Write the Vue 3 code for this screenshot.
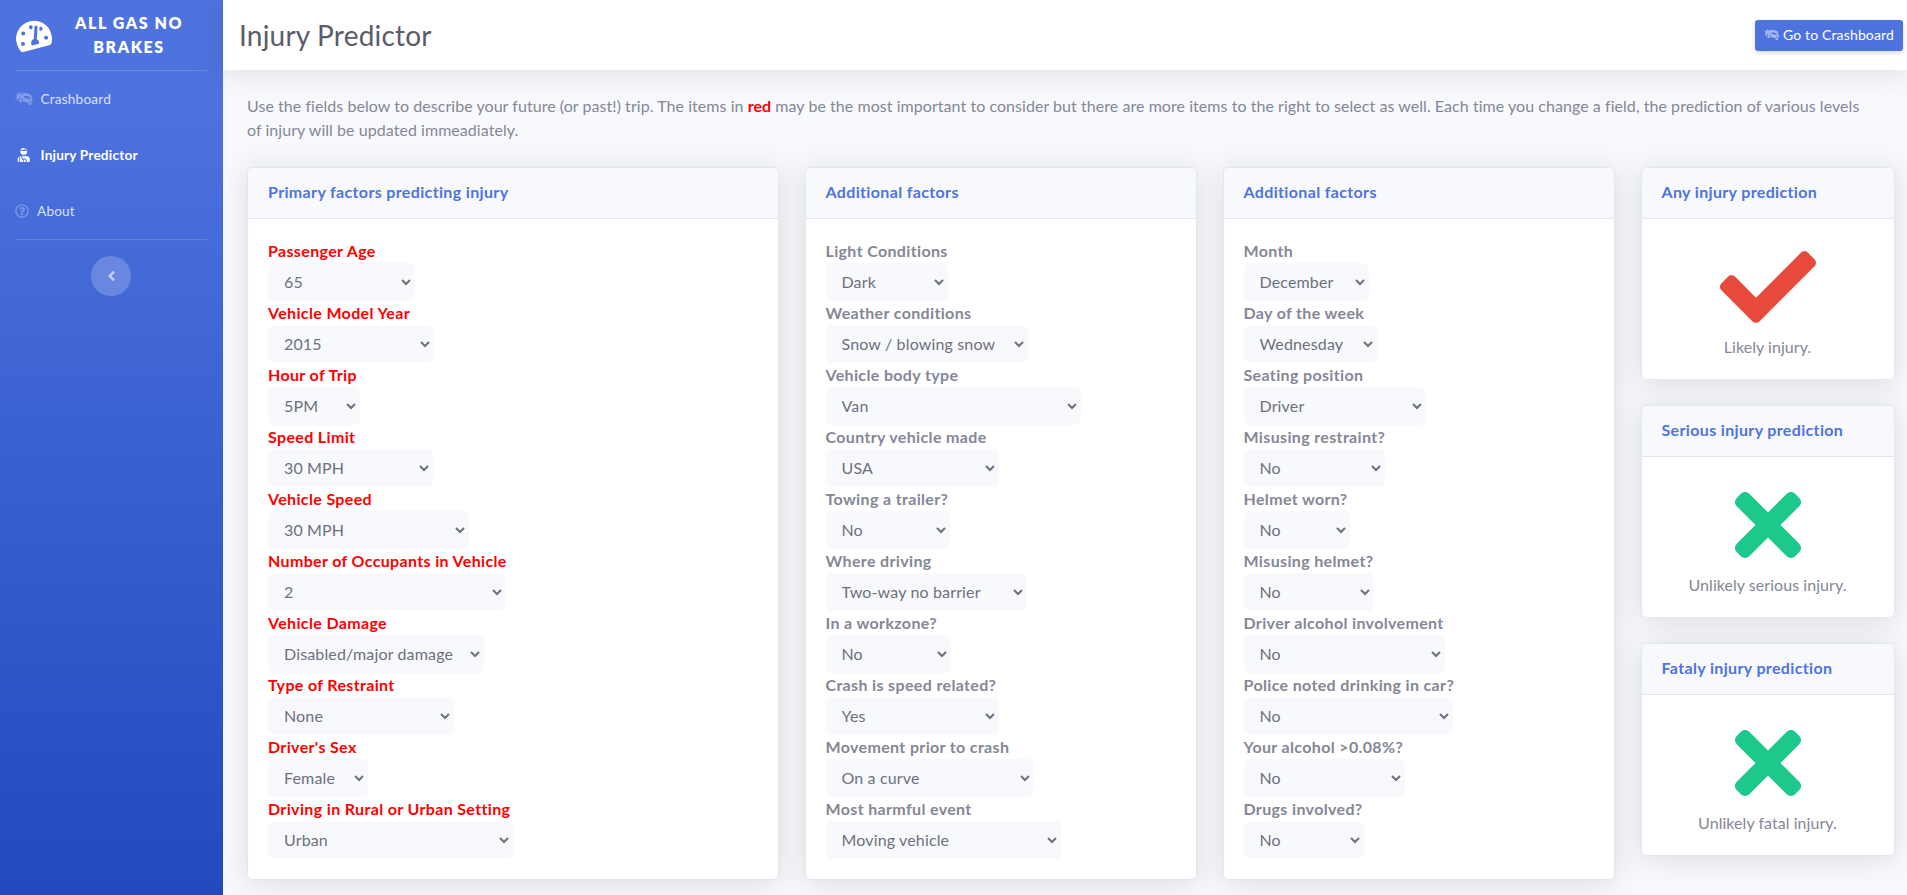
<script setup>
const primary = [
  { label: "Passenger Age", value: "65", w: 147 },
  { label: "Vehicle Model Year", value: "2015", w: 166 },
  { label: "Hour of Trip", value: "5PM", w: 92 },
  { label: "Speed Limit", value: "30 MPH", w: 165 },
  { label: "Vehicle Speed", value: "30 MPH", w: 201 },
  { label: "Number of Occupants in Vehicle", value: "2", w: 238 },
  { label: "Vehicle Damage", value: "Disabled/major damage", w: 216 },
  { label: "Type of Restraint", value: "None", w: 186 },
  { label: "Driver's Sex", value: "Female", w: 100 },
  { label: "Driving in Rural or Urban Setting", value: "Urban", w: 245 },
];

const additional = [
  { label: "Light Conditions", value: "Dark", w: 122 },
  { label: "Weather conditions", value: "Snow / blowing snow", w: 202 },
  { label: "Vehicle body type", value: "Van", w: 255 },
  { label: "Country vehicle made", value: "USA", w: 173 },
  { label: "Towing a trailer?", value: "No", w: 124 },
  { label: "Where driving", value: "Two-way no barrier", w: 201 },
  { label: "In a workzone?", value: "No", w: 125 },
  { label: "Crash is speed related?", value: "Yes", w: 173 },
  { label: "Movement prior to crash", value: "On a curve", w: 208 },
  { label: "Most harmful event", value: "Moving vehicle", w: 235 },
];

const additional2 = [
  { label: "Month", value: "December", w: 125 },
  { label: "Day of the week", value: "Wednesday", w: 133 },
  { label: "Seating position", value: "Driver", w: 182 },
  { label: "Misusing restraint?", value: "No", w: 141 },
  { label: "Helmet worn?", value: "No", w: 106 },
  { label: "Misusing helmet?", value: "No", w: 130 },
  { label: "Driver alcohol involvement", value: "No", w: 201 },
  { label: "Police noted drinking in car?", value: "No", w: 209 },
  { label: "Your alcohol >0.08%?", value: "No", w: 161 },
  { label: "Drugs involved?", value: "No", w: 120 },
];

const columns = [
  { title: "Primary factors predicting injury", fields: primary, red: true },
  { title: "Additional factors", fields: additional, red: false },
  { title: "Additional factors", fields: additional2, red: false },
];

const predictions = [
  { title: "Any injury prediction", likely: true, text: "Likely injury." },
  { title: "Serious injury prediction", likely: false, text: "Unlikely serious injury." },
  { title: "Fataly injury prediction", likely: false, text: "Unlikely fatal injury." },
];

const carCrash = "M143.25 220.81l-12.42 46.37c-3.01 11.25-3.63 22.89-2.41 34.39l-35.2 28.98c-6.57 5.41-16.31-.43-14.62-8.77l15.44-76.68c1.06-5.26-2.66-10.28-8-10.79l-77.86-7.55c-8.47-.82-11.23-11.83-4.14-16.54l65.15-43.3c4.46-2.97 5.38-9.15 1.98-13.29L21.46 93.22c-5.41-6.57.43-16.3 8.78-14.62l76.68 15.44c5.26 1.06 10.28-2.66 10.8-8l7.55-77.86c.82-8.48 11.83-11.23 16.55-4.14l43.3 65.14c2.97 4.46 9.15 5.38 13.29 1.98l60.4-49.71c6.57-5.41 16.3.43 14.62 8.77L262.1 86.38c-2.71 3.05-5.43 6.09-7.91 9.4l-32.15 42.97-10.71 14.32c-32.73 8.76-59.18 34.53-68.08 67.74zm494.57 95.24l-12.42 46.36c-3.13 11.68-9.38 21.61-17.55 29.36a66.876 66.876 0 0 1-8.76 7l-13.99 52.23c-1.14 4.27-3.1 8.1-5.65 11.38-7.67 9.84-20.74 14.68-33.54 11.25L515 466.89c-17.07-4.57-27.2-22.12-22.63-39.19l8.28-30.91-247.28-66.26-8.28 30.91c-4.57 17.07-22.12 27.2-39.19 22.63l-30.91-8.28c-12.8-3.43-21.7-14.16-23.42-26.51-.57-4.12-.35-8.42.79-12.68l13.99-52.23a66.62 66.62 0 0 1-4.09-10.45c-3.2-10.79-3.65-22.52-.52-34.2l12.42-46.37c5.31-19.8 19.36-34.83 36.89-42.21a64.336 64.336 0 0 1 18.49-4.72l18.13-24.23 32.15-42.97c3.45-4.61 7.19-8.9 11.2-12.84 8-7.89 17.03-14.44 26.74-19.51 4.86-2.53 9.89-4.71 15.05-6.49 10.33-3.58 21.19-5.63 32.24-6.04 11.05-.41 22.31.82 33.43 3.8l122.68 32.87c11.12 2.98 21.48 7.54 30.85 13.43a111.11 111.11 0 0 1 34.69 34.5c8.82 13.88 14.64 29.84 16.68 46.99l6.36 53.29 3.59 30.05a64.49 64.49 0 0 1 22.74 29.93c4.39 11.88 5.29 25.19 1.75 38.39zM255.58 234.34c-18.55-4.97-34.21 4.04-39.17 22.53-4.96 18.49 4.11 34.12 22.65 39.09 18.55 4.97 45.54 15.51 50.49-2.98 4.96-18.49-15.43-53.67-33.97-58.64zm290.61 28.17l-6.36-53.29c-.58-4.87-1.89-9.53-3.82-13.86-5.8-12.99-17.2-23.01-31.42-26.82l-122.68-32.87a48.008 48.008 0 0 0-50.86 17.61l-32.15 42.97 172 46.08 75.29 20.18zm18.49 54.65c-18.55-4.97-53.8 15.31-58.75 33.79-4.95 18.49 23.69 22.86 42.24 27.83 18.55 4.97 34.21-4.04 39.17-22.53 4.95-18.48-4.11-34.12-22.66-39.09z";
</script>

<template>
  <div class="wrapper">
    <aside class="sidebar">
      <div class="brand">
        <svg class="brand-icon" viewBox="0 0 576 512" fill="#fff">
          <path d="M288 32C128.94 32 0 160.94 0 320c0 52.8 14.25 102.26 39.06 144.8 5.61 9.62 16.3 15.2 27.44 15.2h443c11.14 0 21.83-5.58 27.44-15.2C561.75 422.26 576 372.8 576 320c0-159.06-128.94-288-288-288zm0 64c14.71 0 26.58 10.13 30.32 23.65-1.11 2.26-2.64 4.23-3.45 6.67l-9.22 27.67c-5.13 3.49-10.97 6.01-17.64 6.01-17.67 0-32-14.33-32-32S270.33 96 288 96zM96 384c-17.67 0-32-14.33-32-32s14.33-32 32-32 32 14.33 32 32-14.33 32-32 32zm48-160c-17.67 0-32-14.33-32-32s14.33-32 32-32 32 14.33 32 32-14.33 32-32 32zm246.77-72.41l-61.33 184C343.13 347.33 352 364.54 352 384c0 11.72-3.38 22.55-8.88 32H232.88c-5.5-9.45-8.88-20.28-8.88-32 0-33.94 26.5-61.43 59.9-63.59l61.34-184.01c4.17-12.56 17.73-19.45 30.36-15.17 12.57 4.19 19.35 17.79 15.17 30.36zm14.66 57.2l15.52-46.55c3.47-1.29 7.13-2.23 11.05-2.23 17.67 0 32 14.33 32 32s-14.33 32-32 32c-11.38-.01-20.89-6.28-26.57-15.22zM480 384c-17.67 0-32-14.33-32-32s14.33-32 32-32 32 14.33 32 32-14.33 32-32 32z" />
        </svg>
        <div class="brand-text">ALL GAS NO BRAKES</div>
      </div>
      <hr class="side-divider" />
      <a class="nav-link">
        <svg class="nav-icon" viewBox="0 0 640 512"><path :d="carCrash" /></svg>
        <span>Crashboard</span>
      </a>
      <a class="nav-link active">
        <svg class="nav-icon" viewBox="0 0 448 512"><path d="M277.37 11.98C261.08 4.47 243.11 0 224 0c-53.69 0-99.5 33.13-118.51 80h81.19l90.69-68.02zM342.51 80c-7.9-19.47-20.67-36.2-36.49-49.52L239.99 80h102.52zM224 256c70.69 0 128-57.31 128-128 0-5.48-.95-10.7-1.61-16H97.61c-.67 5.3-1.61 10.52-1.61 16 0 70.69 57.31 128 128 128zM80 299.7V512h128.26l-98.45-221.52A132.835 132.835 0 0 0 80 299.7zM0 464c0 26.51 21.49 48 48 48V320.24C18.88 344.89 0 381.26 0 422.4V464zm256-48h-55.38l42.67 96H256c26.47 0 48-21.53 48-48s-21.53-48-48-48zm57.6-128h-16.71c-22.24 10.18-46.88 16-72.89 16s-50.65-5.82-72.89-16h-7.37l42.67 96H256c44.11 0 80 35.89 80 80 0 18.08-6.26 34.59-16.41 48H400c26.51 0 48-21.49 48-48v-41.6c0-74.23-60.17-134.4-134.4-134.4z" /></svg>
        <span>Injury Predictor</span>
      </a>
      <a class="nav-link">
        <svg class="nav-icon small" viewBox="0 0 512 512"><path d="M256 8C119.043 8 8 119.083 8 256c0 136.997 111.043 248 248 248s248-111.003 248-248C504 119.083 392.957 8 256 8zm0 448c-110.532 0-200-89.431-200-200 0-110.495 89.472-200 200-200 110.491 0 200 89.471 200 200 0 110.53-89.431 200-200 200zm107.244-255.2c0 67.052-72.421 68.084-72.421 92.863V300c0 6.627-5.373 12-12 12h-45.647c-6.627 0-12-5.373-12-12v-8.659c0-35.745 27.1-50.034 47.579-61.516 17.561-9.845 28.324-16.541 28.324-29.579 0-17.246-21.999-28.693-39.784-28.693-23.189 0-33.894 10.977-48.942 29.969-4.057 5.12-11.46 6.071-16.666 2.124l-27.824-21.098c-5.107-3.873-6.251-11.066-2.644-16.363C184.846 131.491 214.94 112 261.794 112c49.071 0 101.45 38.304 101.45 88.8zM298 368c0 23.159-18.841 42-42 42s-42-18.841-42-42 18.841-42 42-42 42 18.841 42 42z" /></svg>
        <span>About</span>
      </a>
      <hr class="side-divider" />
      <button class="toggle">
        <svg viewBox="0 0 256 512" width="9" height="16" fill="rgba(255,255,255,0.6)"><path d="M31.7 239l136-136c9.4-9.4 24.6-9.4 33.9 0l22.6 22.6c9.4 9.4 9.4 24.6 0 33.9L127.9 256l96.4 96.4c9.4 9.4 9.4 24.6 0 33.9l-22.6 22.6c-9.4 9.4-24.6 9.4-33.9 0l-136-136c-9.5-9.4-9.5-24.6-.1-33.9z" /></svg>
      </button>
    </aside>

    <div class="content">
      <header class="topbar">
        <h1>Injury Predictor</h1>
        <a class="btn-crash">
          <svg viewBox="0 0 640 512" width="15" height="12" fill="rgba(255,255,255,0.5)"><path :d="carCrash" /></svg>
          Go to Crashboard
        </a>
      </header>

      <main class="page">
        <p class="intro">
          Use the fields below to describe your future (or past!) trip. The items in <b>red</b> may be the most important to consider but there are more items to the right to select as well. Each time you change a field, the prediction of various levels of injury will be updated immeadiately.
        </p>

        <div class="grid">
          <section v-for="col in columns" :key="col.fields[0].label" class="card">
            <div class="card-head">{{ col.title }}</div>
            <div class="card-body">
              <div v-for="f in col.fields" :key="f.label">
                <label :class="{ red: col.red }">{{ f.label }}</label>
                <select :style="{ width: f.w + 'px' }">
                  <option>{{ f.value }}</option>
                </select>
              </div>
            </div>
          </section>

          <div class="predictions">
            <section v-for="p in predictions" :key="p.title" class="card">
              <div class="card-head">{{ p.title }}</div>
              <div class="card-body result">
                <svg v-if="p.likely" class="mark" viewBox="0 0 512 512" fill="#e74a3b">
                  <path d="M173.898 439.404l-166.4-166.4c-9.997-9.997-9.997-26.206 0-36.204l36.203-36.204c9.997-9.998 26.207-9.998 36.204 0L192 312.69 432.095 72.596c9.997-9.997 26.207-9.997 36.204 0l36.203 36.204c9.997 9.997 9.997 26.206 0 36.204l-294.4 294.401c-9.998 9.997-26.207 9.997-36.204-.001z" />
                </svg>
                <svg v-else class="mark" viewBox="0 0 352 512" fill="#1cc88a">
                  <path d="M242.72 256l100.07-100.07c12.28-12.28 12.28-32.19 0-44.48l-22.24-22.24c-12.28-12.28-32.19-12.28-44.48 0L176 189.28 75.93 89.21c-12.28-12.28-32.19-12.28-44.48 0L9.21 111.45c-12.28 12.28-12.28 32.19 0 44.48L109.28 256 9.21 356.07c-12.28 12.28-12.28 32.19 0 44.48l22.24 22.24c12.28 12.28 32.2 12.28 44.48 0L176 322.72l100.07 100.07c12.28 12.28 32.2 12.28 44.48 0l22.24-22.24c12.28-12.28 12.28-32.19 0-44.48L242.72 256z" />
                </svg>
                <div>{{ p.text }}</div>
              </div>
            </section>
          </div>
        </div>
      </main>
    </div>
  </div>
</template>

<style>
html, body {
  margin: 0;
  background: #f8f9fc;
}
</style>

<style scoped>
.wrapper {
  display: flex;
  min-height: 895px;
  font-family: "Lato", "Open Sans", sans-serif;
  font-size: 16px;
  line-height: 24px;
  letter-spacing: 0.05px;
  color: #858796;
  background: #f8f9fc;
}

.sidebar {
  width: 223px;
  flex-shrink: 0;
  display: flex;
  flex-direction: column;
  background: linear-gradient(180deg, #4e73df 10%, #224abe 100%);
}

.brand {
  height: 70px;
  display: flex;
  align-items: center;
  gap: 3px;
  padding-left: 15px;
  box-sizing: border-box;
}

.brand-icon {
  width: 36px;
  height: 32px;
  transform: rotate(-15deg);
  flex-shrink: 0;
}

.brand-text {
  width: 150px;
  color: #fff;
  font-weight: 800;
  font-size: 16px;
  letter-spacing: 1.6px;
  text-align: center;
}

.side-divider {
  border: 0;
  border-top: 1px solid rgba(255, 255, 255, 0.15);
  margin: 0 16px;
}

.nav-link {
  height: 56px;
  display: flex;
  align-items: center;
  gap: 8px;
  padding-left: 15px;
  color: rgba(255, 255, 255, 0.8);
  font-size: 13.6px;
  letter-spacing: 0.2px;
}

.nav-link.active {
  color: #fff;
  font-weight: 700;
}

.nav-icon {
  width: 17.5px;
  height: 14px;
  fill: rgba(255, 255, 255, 0.3);
}

.nav-icon.small {
  width: 14px;
}

.nav-link.active .nav-icon {
  fill: #fff;
}

.toggle {
  width: 40px;
  height: 40px;
  margin: 16px 0 0 91px;
  padding: 0;
  border: 0;
  border-radius: 50%;
  background: rgba(255, 255, 255, 0.2);
  display: flex;
  align-items: center;
  justify-content: center;
}

.content {
  flex: 1;
  min-width: 0;
}

.topbar {
  height: 70px;
  display: flex;
  align-items: center;
  justify-content: space-between;
  padding: 0 4px 0 16px;
  background: #fff;
  box-shadow: 0 0.15rem 1.75rem 0 rgba(58, 59, 69, 0.15);
  box-sizing: border-box;
}

.topbar h1 {
  margin: 0;
  font-size: 28px;
  font-weight: 400;
  letter-spacing: 0.2px;
  color: #5a5c69;
}

.btn-crash {
  height: 31px;
  width: 148px;
  display: flex;
  align-items: center;
  justify-content: center;
  gap: 4px;
  box-sizing: border-box;
  background: #4e73df;
  color: #fff;
  font-size: 14px;
  letter-spacing: 0.15px;
  border-radius: 3px;
  box-shadow: 0 0.125rem 0.25rem 0 rgba(58, 59, 69, 0.2);
}

.page {
  padding: 24px 13px 0 24px;
}

.intro {
  max-width: 1620px;
  margin: 0 0 25px;
}

.intro b {
  color: #f00;
}

.grid {
  display: grid;
  grid-template-columns: 532px 392.5px 392.5px 254px;
  column-gap: 25.5px;
}

.predictions {
  display: flex;
  flex-direction: column;
  gap: 25.5px;
}

.card {
  background: #fff;
  border: 1px solid #e3e6f0;
  border-radius: 5.6px;
  box-shadow: 0 0.15rem 1.75rem 0 rgba(58, 59, 69, 0.15);
  overflow: hidden;
}

.card-head {
  padding: 12px 20px 13.5px;
  background: #f8f9fc;
  border-bottom: 1px solid #e3e6f0;
  color: #4e73df;
  font-weight: 700;
  letter-spacing: 0.35px;
}

.card-body {
  padding: 20px;
}

.card-body label {
  display: block;
  font-weight: 700;
  letter-spacing: 0.35px;
}

.card-body label.red {
  color: #f00;
}

.card-body select {
  display: block;
  height: 38px;
  padding: 6px 11px;
  border: 1px solid #f8f9fc;
  border-radius: 5.6px;
  background: #f8f9fc;
  color: #6e707e;
  font: inherit;
  letter-spacing: 0.15px;
}

.result {
  text-align: center;
}

.mark {
  display: block;
  height: 96px;
  margin: 0 auto;
}
</style>
